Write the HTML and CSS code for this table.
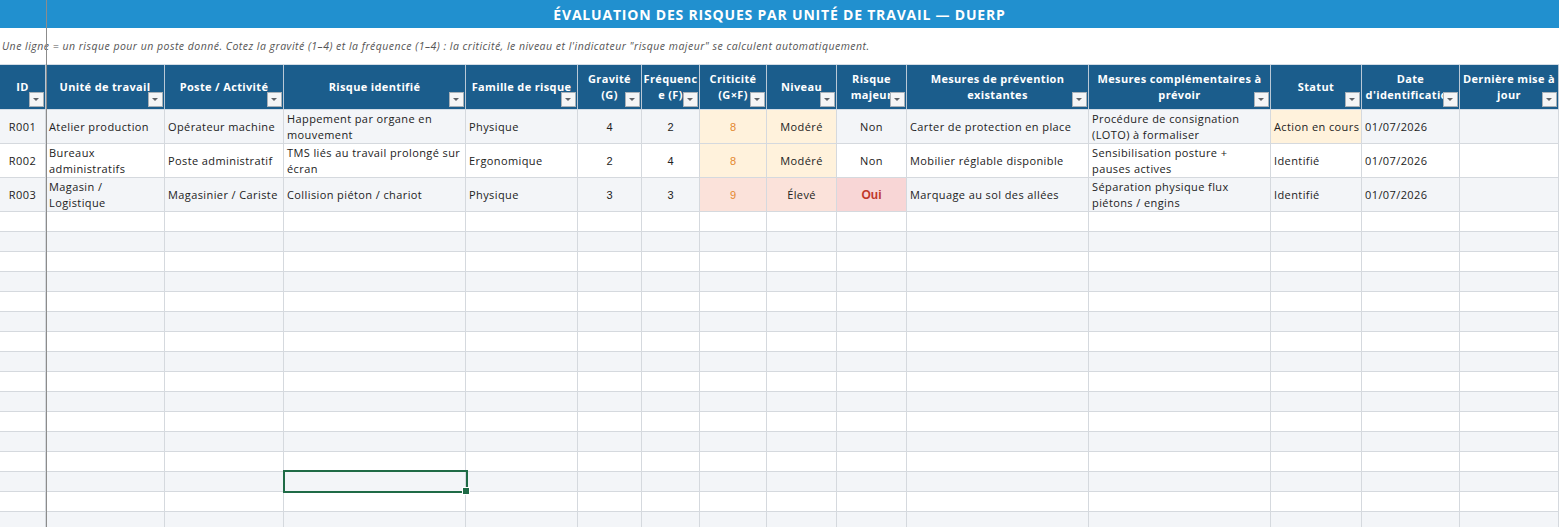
FILE: index.html
```html
<!DOCTYPE html>
<html lang="fr">
<head>
<meta charset="utf-8">
<title>DUERP</title>
<link rel="stylesheet" href="styles.css">
</head>
<body>
<div class="sheet">
  <div class="title">ÉVALUATION DES RISQUES PAR UNITÉ DE TRAVAIL — DUERP</div>
  <div class="note">Une ligne = un risque pour un poste donné. Cotez la gravité (1–4) et la fréquence (1–4) : la criticité, le niveau et l'indicateur "risque majeur" se calculent automatiquement.</div>

  <div class="row head">
    <div class="h"><span>ID</span><i class="flt"></i></div>
    <div class="h"><span>Unité de travail</span><i class="flt"></i></div>
    <div class="h"><span>Poste / Activité</span><i class="flt"></i></div>
    <div class="h"><span>Risque identifié</span><i class="flt"></i></div>
    <div class="h"><span>Famille de risque</span><i class="flt"></i></div>
    <div class="h"><span>Gravité<br>(G)</span><i class="flt"></i></div>
    <div class="h"><span>Fréquenc<br>e (F)</span><i class="flt"></i></div>
    <div class="h"><span>Criticité<br>(G×F)</span><i class="flt"></i></div>
    <div class="h"><span>Niveau</span><i class="flt"></i></div>
    <div class="h"><span>Risque<br>majeur</span><i class="flt"></i></div>
    <div class="h"><span>Mesures de prévention<br>existantes</span><i class="flt"></i></div>
    <div class="h"><span>Mesures complémentaires à<br>prévoir</span><i class="flt"></i></div>
    <div class="h"><span>Statut</span><i class="flt"></i></div>
    <div class="h"><span>Date<br>d'identification</span><i class="flt"></i></div>
    <div class="h"><span>Dernière mise à<br>jour</span><i class="flt"></i></div>
  </div>

  <div class="row data alt">
    <div class="c ctr">R001</div>
    <div class="c">Atelier production</div>
    <div class="c">Opérateur machine</div>
    <div class="c"><span>Happement par organe en<br>mouvement</span></div>
    <div class="c">Physique</div>
    <div class="c ctr num">4</div>
    <div class="c ctr num">2</div>
    <div class="c ctr num crit warn">8</div>
    <div class="c ctr warn">Modéré</div>
    <div class="c ctr">Non</div>
    <div class="c">Carter de protection en place</div>
    <div class="c"><span>Procédure de consignation<br>(LOTO) à formaliser</span></div>
    <div class="c warn">Action en cours</div>
    <div class="c">01/07/2026</div>
    <div class="c"></div>
  </div>

  <div class="row data">
    <div class="c ctr">R002</div>
    <div class="c"><span>Bureaux<br>administratifs</span></div>
    <div class="c">Poste administratif</div>
    <div class="c"><span>TMS liés au travail prolongé sur<br>écran</span></div>
    <div class="c">Ergonomique</div>
    <div class="c ctr num">2</div>
    <div class="c ctr num">4</div>
    <div class="c ctr num crit warn">8</div>
    <div class="c ctr warn">Modéré</div>
    <div class="c ctr">Non</div>
    <div class="c">Mobilier réglable disponible</div>
    <div class="c"><span>Sensibilisation posture +<br>pauses actives</span></div>
    <div class="c">Identifié</div>
    <div class="c">01/07/2026</div>
    <div class="c"></div>
  </div>

  <div class="row data alt">
    <div class="c ctr">R003</div>
    <div class="c"><span>Magasin /<br>Logistique</span></div>
    <div class="c">Magasinier / Cariste</div>
    <div class="c">Collision piéton / chariot</div>
    <div class="c">Physique</div>
    <div class="c ctr num">3</div>
    <div class="c ctr num">3</div>
    <div class="c ctr num crit high">9</div>
    <div class="c ctr high">Élevé</div>
    <div class="c ctr num major">Oui</div>
    <div class="c">Marquage au sol des allées</div>
    <div class="c"><span>Séparation physique flux<br>piétons / engins</span></div>
    <div class="c">Identifié</div>
    <div class="c">01/07/2026</div>
    <div class="c"></div>
  </div>

  <div class="row empty"><div class="c"></div><div class="c"></div><div class="c"></div><div class="c"></div><div class="c"></div><div class="c"></div><div class="c"></div><div class="c"></div><div class="c"></div><div class="c"></div><div class="c"></div><div class="c"></div><div class="c"></div><div class="c"></div><div class="c"></div></div>
  <div class="row empty alt"><div class="c"></div><div class="c"></div><div class="c"></div><div class="c"></div><div class="c"></div><div class="c"></div><div class="c"></div><div class="c"></div><div class="c"></div><div class="c"></div><div class="c"></div><div class="c"></div><div class="c"></div><div class="c"></div><div class="c"></div></div>
  <div class="row empty"><div class="c"></div><div class="c"></div><div class="c"></div><div class="c"></div><div class="c"></div><div class="c"></div><div class="c"></div><div class="c"></div><div class="c"></div><div class="c"></div><div class="c"></div><div class="c"></div><div class="c"></div><div class="c"></div><div class="c"></div></div>
  <div class="row empty alt"><div class="c"></div><div class="c"></div><div class="c"></div><div class="c"></div><div class="c"></div><div class="c"></div><div class="c"></div><div class="c"></div><div class="c"></div><div class="c"></div><div class="c"></div><div class="c"></div><div class="c"></div><div class="c"></div><div class="c"></div></div>
  <div class="row empty"><div class="c"></div><div class="c"></div><div class="c"></div><div class="c"></div><div class="c"></div><div class="c"></div><div class="c"></div><div class="c"></div><div class="c"></div><div class="c"></div><div class="c"></div><div class="c"></div><div class="c"></div><div class="c"></div><div class="c"></div></div>
  <div class="row empty alt"><div class="c"></div><div class="c"></div><div class="c"></div><div class="c"></div><div class="c"></div><div class="c"></div><div class="c"></div><div class="c"></div><div class="c"></div><div class="c"></div><div class="c"></div><div class="c"></div><div class="c"></div><div class="c"></div><div class="c"></div></div>
  <div class="row empty"><div class="c"></div><div class="c"></div><div class="c"></div><div class="c"></div><div class="c"></div><div class="c"></div><div class="c"></div><div class="c"></div><div class="c"></div><div class="c"></div><div class="c"></div><div class="c"></div><div class="c"></div><div class="c"></div><div class="c"></div></div>
  <div class="row empty alt"><div class="c"></div><div class="c"></div><div class="c"></div><div class="c"></div><div class="c"></div><div class="c"></div><div class="c"></div><div class="c"></div><div class="c"></div><div class="c"></div><div class="c"></div><div class="c"></div><div class="c"></div><div class="c"></div><div class="c"></div></div>
  <div class="row empty"><div class="c"></div><div class="c"></div><div class="c"></div><div class="c"></div><div class="c"></div><div class="c"></div><div class="c"></div><div class="c"></div><div class="c"></div><div class="c"></div><div class="c"></div><div class="c"></div><div class="c"></div><div class="c"></div><div class="c"></div></div>
  <div class="row empty alt"><div class="c"></div><div class="c"></div><div class="c"></div><div class="c"></div><div class="c"></div><div class="c"></div><div class="c"></div><div class="c"></div><div class="c"></div><div class="c"></div><div class="c"></div><div class="c"></div><div class="c"></div><div class="c"></div><div class="c"></div></div>
  <div class="row empty"><div class="c"></div><div class="c"></div><div class="c"></div><div class="c"></div><div class="c"></div><div class="c"></div><div class="c"></div><div class="c"></div><div class="c"></div><div class="c"></div><div class="c"></div><div class="c"></div><div class="c"></div><div class="c"></div><div class="c"></div></div>
  <div class="row empty alt"><div class="c"></div><div class="c"></div><div class="c"></div><div class="c"></div><div class="c"></div><div class="c"></div><div class="c"></div><div class="c"></div><div class="c"></div><div class="c"></div><div class="c"></div><div class="c"></div><div class="c"></div><div class="c"></div><div class="c"></div></div>
  <div class="row empty"><div class="c"></div><div class="c"></div><div class="c"></div><div class="c"></div><div class="c"></div><div class="c"></div><div class="c"></div><div class="c"></div><div class="c"></div><div class="c"></div><div class="c"></div><div class="c"></div><div class="c"></div><div class="c"></div><div class="c"></div></div>
  <div class="row empty alt"><div class="c"></div><div class="c"></div><div class="c"></div><div class="c"></div><div class="c"></div><div class="c"></div><div class="c"></div><div class="c"></div><div class="c"></div><div class="c"></div><div class="c"></div><div class="c"></div><div class="c"></div><div class="c"></div><div class="c"></div></div>
  <div class="row empty"><div class="c"></div><div class="c"></div><div class="c"></div><div class="c"></div><div class="c"></div><div class="c"></div><div class="c"></div><div class="c"></div><div class="c"></div><div class="c"></div><div class="c"></div><div class="c"></div><div class="c"></div><div class="c"></div><div class="c"></div></div>
  <div class="row empty alt"><div class="c"></div><div class="c"></div><div class="c"></div><div class="c"></div><div class="c"></div><div class="c"></div><div class="c"></div><div class="c"></div><div class="c"></div><div class="c"></div><div class="c"></div><div class="c"></div><div class="c"></div><div class="c"></div><div class="c"></div></div>

  <div class="freeze"></div>
  <div class="selection"><i class="handle"></i></div>
</div>
</body>
</html>
```

FILE: styles.css
```css
body {
  margin: 0;
  background: #ffffff;
  font-family: "Open Sans", "Noto Sans", sans-serif;
}

.sheet {
  position: relative;
  width: 1561px;
  height: 527px;
  overflow: hidden;
}

.title {
  width: 1559px;
  height: 28px;
  background: #2190cf;
  color: #ffffff;
  font-size: 14px;
  font-weight: 700;
  letter-spacing: 0.8px;
  display: flex;
  align-items: center;
  justify-content: center;
}

.note {
  height: 36px;
  display: flex;
  align-items: center;
  padding-left: 2px;
  font-size: 10.5px;
  letter-spacing: 0.48px;
  font-style: italic;
  color: #555555;
  white-space: nowrap;
}

.row {
  display: grid;
  grid-template-columns: 46px 119px 119px 182px 112px 64px 58px 67px 70px 70px 182px 182px 91px 98px 99px;
  width: 1559px;
}

.head {
  height: 46px;
  background: #1b5d8c;
  border-top: 1px solid #d4dde6;
  box-sizing: border-box;
}

.h {
  position: relative;
  display: flex;
  align-items: center;
  justify-content: center;
  text-align: center;
  color: #ffffff;
  font-size: 11px;
  font-weight: 700;
  letter-spacing: 0.35px;
  line-height: 16px;
  white-space: nowrap;
  overflow: hidden;
  border-right: 1px solid #b9c8d6;
  border-bottom: 1px solid #d4dde6;
  box-sizing: border-box;
}

.h span {
  max-width: 100%;
}

.flt {
  position: absolute;
  right: 1px;
  bottom: 2px;
  width: 15px;
  height: 15px;
  box-sizing: border-box;
  background: #f4f5f6;
  border: 1px solid #a9b1b8;
}

.flt::after {
  content: "";
  position: absolute;
  left: 3px;
  top: 5px;
  border-left: 3.5px solid transparent;
  border-right: 3.5px solid transparent;
  border-top: 3.5px solid #5f6368;
}

.data {
  height: 34px;
}

.empty {
  height: 20px;
}

.c {
  display: flex;
  align-items: center;
  padding: 0 3px;
  font-size: 11px;
  letter-spacing: 0.4px;
  line-height: 16px;
  color: #222222;
  white-space: nowrap;
  overflow: hidden;
  border-right: 1px solid #d5d9de;
  border-bottom: 1px solid #d5d9de;
  box-sizing: border-box;
  background: #ffffff;
}

.alt .c {
  background: #f3f5f8;
}

.ctr {
  justify-content: center;
}

.num {
  font-family: "Liberation Sans", Arial, sans-serif;
  font-size: 11px;
  letter-spacing: 0;
}

.row .warn {
  background: #fff2dc;
}

.row .high {
  background: #fbe2da;
}

.row .major {
  background: #f8d6d6;
  color: #c0392b;
  font-weight: 700;
  font-size: 12px;
}

.crit {
  color: #e3882e;
}

.freeze {
  position: absolute;
  left: 46px;
  top: 0;
  width: 1px;
  height: 100%;
  background: #8c8c8c;
}

.selection {
  position: absolute;
  left: 283px;
  top: 470px;
  width: 185px;
  height: 23px;
  box-sizing: border-box;
  border: 2px solid #1f6b46;
}

.handle {
  position: absolute;
  right: -4px;
  bottom: -4px;
  width: 6px;
  height: 6px;
  background: #1f6b46;
  border: 1px solid #ffffff;
}
```
